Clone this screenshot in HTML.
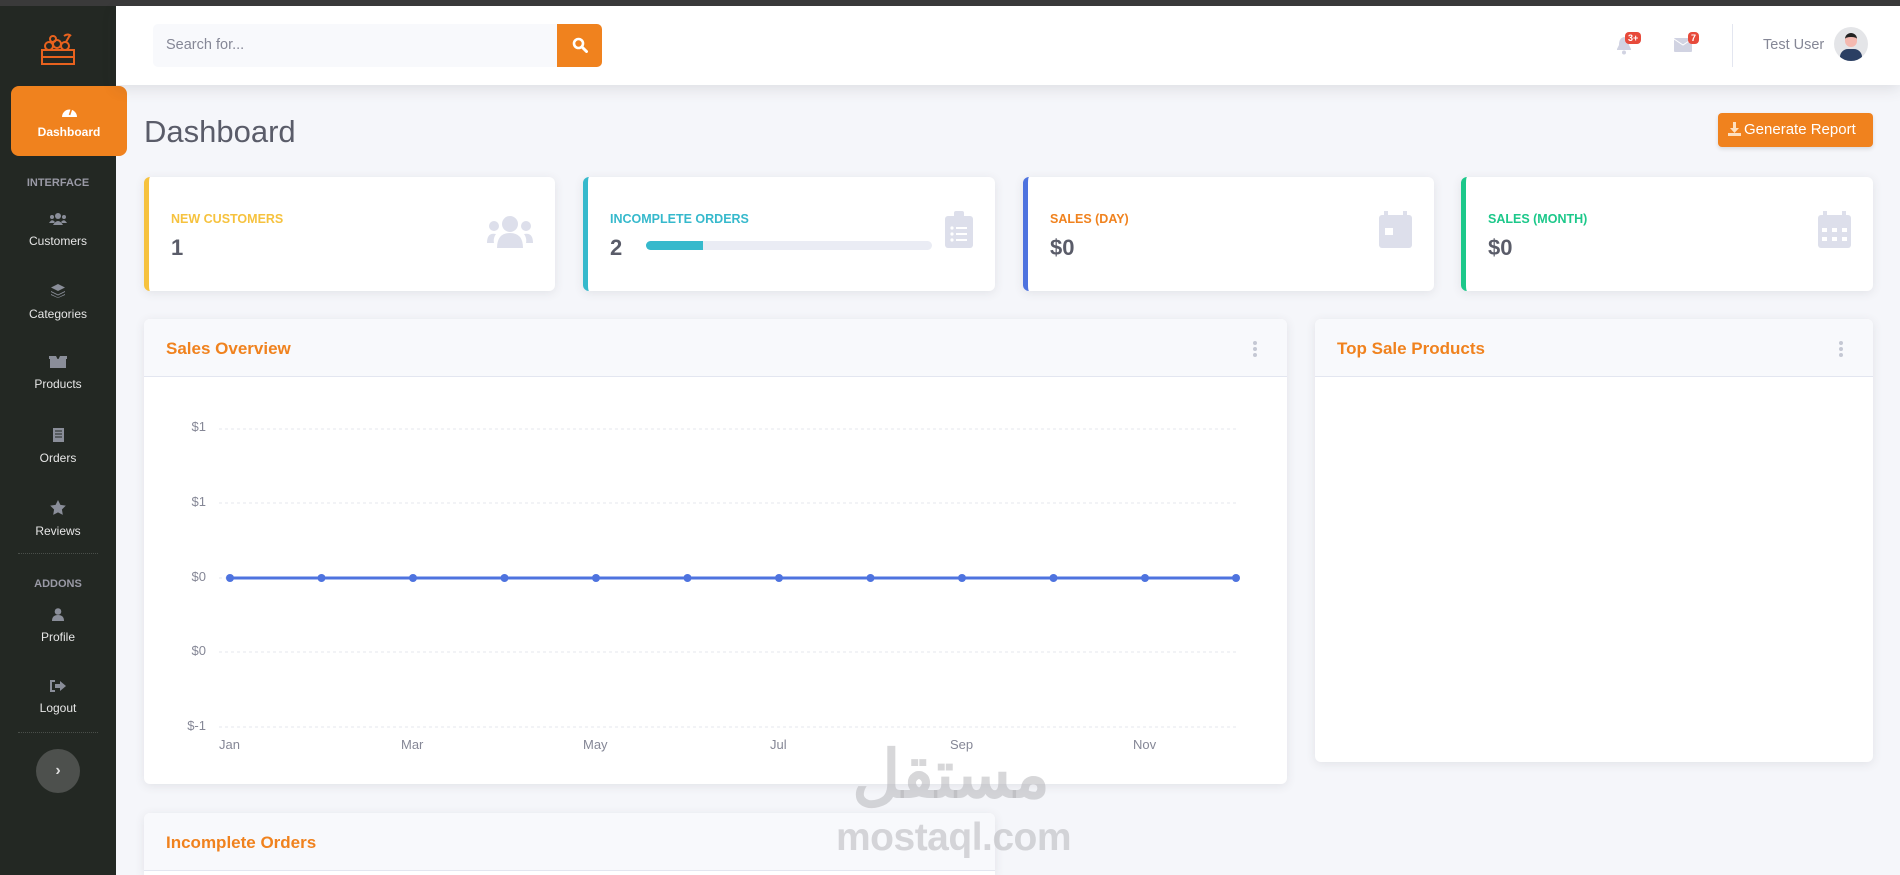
<!DOCTYPE html>
<html style="overflow:hidden;height:875px"><head><meta charset="utf-8">
<style>
*{box-sizing:border-box;margin:0;padding:0}
body{width:1900px;height:875px;overflow:hidden;background:#f5f6fa;font-family:"Liberation Sans",sans-serif;position:relative}
.abs{position:absolute}
.topline{left:0;top:0;width:1900px;height:6px;background:#3a3a3a}
.side{left:0;top:6px;width:116px;height:869px;background:#232823}
.topbar{left:116px;top:6px;width:1784px;height:79px;background:#fff;box-shadow:0 4px 14px rgba(58,59,69,.12)}
.sitem{position:absolute;left:0;width:116px;text-align:center;color:#e6e6e6;font-size:12px}
.sitem svg{display:block;margin:0 auto 9px}
.shead{position:absolute;left:0;width:116px;text-align:center;color:#9a9aa6;font-size:11px;font-weight:bold}
.sdiv{position:absolute;left:18px;width:80px;border-top:1px dotted #4a4f4a}
.card{position:absolute;background:#fff;border-radius:6px;box-shadow:0 2px 10px rgba(58,59,69,.1)}
.stat{top:177px;height:114px;border-left:5px solid}
.stat .lb{position:absolute;left:22px;top:35px;font-size:12.5px;font-weight:bold}
.stat .val{position:absolute;left:22px;top:58px;font-size:22px;font-weight:bold;color:#5a5c69}
.stat svg{position:absolute;right:22px;top:34px}
.ch{position:absolute;left:0;top:0;right:0;height:58px;background:#f8f9fc;border-bottom:1px solid #e3e6f0;border-radius:6px 6px 0 0}
.ch span{position:absolute;left:22px;top:20px;color:#f0821e;font-weight:bold;font-size:17px}
.dots{position:absolute;right:30px;top:22px;width:4px}
.dots i{display:block;width:4px;height:4px;border-radius:2px;background:#c5c8d4;margin-bottom:2px}
.yl{position:absolute;font-size:13px;color:#858796;text-align:right;width:40px;left:166px}
.xl{position:absolute;font-size:13px;color:#858796;top:737px}
</style></head><body>
<div class="abs topline"></div>
<div class="abs side">
  <svg class="abs" style="left:40px;top:26px" width="36" height="34" viewBox="0 0 36 34" fill="none" stroke="#e8621e" stroke-width="2"><rect x="2" y="18" width="32" height="14"/><line x1="2" y1="25" x2="34" y2="25"/><circle cx="9" cy="14" r="4"/><circle cx="17" cy="12" r="4"/><circle cx="25" cy="14" r="4"/><circle cx="13" cy="7" r="3"/><path d="M26 10 L30 3 M24 4 Q28 1 31 4"/></svg>
  <div class="abs" style="left:11px;top:80px;width:116px;height:70px;background:#f0821e;border-radius:8px;color:#fff;text-align:center;font-size:12px;font-weight:bold">
    <svg style="display:block;margin:18px auto 7px" width="17" height="14" viewBox="0 0 17 14"><path d="M1 13 A7.5 7.5 0 1 1 16 13 Z" fill="#fff"/><path d="M8.5 11 L10.5 5" stroke="#f0821e" stroke-width="1.6"/></svg>Dashboard</div>
  <div class="shead" style="top:171px">INTERFACE</div>
  <div class="sitem" style="top:207px"><svg width="18" height="12" viewBox="0 0 18 12" fill="#8a8e99"><circle cx="9" cy="3" r="3"/><circle cx="3" cy="4" r="2"/><circle cx="15" cy="4" r="2"/><path d="M4 12 Q9 4 14 12Z"/><path d="M0 10 Q3 5 6 9 L5 10Z M18 10 Q15 5 12 9 L13 10Z"/></svg>Customers</div>
  <div class="sitem" style="top:278px"><svg width="14" height="14" viewBox="0 0 14 14" fill="#8a8e99"><path d="M7 0 L14 3.5 L7 7 L0 3.5Z M0 7 L7 10.5 L14 7 L14 8 L7 11.5 L0 8Z M0 10 L7 13.5 L14 10 L14 11 L7 14 L0 11Z"/></svg>Categories</div>
  <div class="sitem" style="top:350px"><svg width="18" height="12" viewBox="0 0 18 12" fill="#8a8e99"><rect x="1" y="3" width="16" height="9"/><path d="M0 0 L7 0 L9 4 L11 0 L18 0 L18 3 L0 3Z"/></svg>Products</div>
  <div class="sitem" style="top:422px"><svg width="11" height="14" viewBox="0 0 11 14" fill="#8a8e99"><rect width="11" height="14"/><path d="M2 3h7M2 6h7M2 9h7" stroke="#232823"/></svg>Orders</div>
  <div class="sitem" style="top:494px"><svg width="16" height="15" viewBox="0 0 24 23" fill="#8a8e99"><path d="M12 0l3.7 7.5 8.3 1.2-6 5.8 1.4 8.3L12 18.9 4.6 22.8 6 14.5 0 8.7l8.3-1.2z"/></svg>Reviews</div>
  <div class="sdiv" style="top:547px"></div>
  <div class="shead" style="top:572px">ADDONS</div>
  <div class="sitem" style="top:602px"><svg width="12" height="13" viewBox="0 0 12 13" fill="#8a8e99"><circle cx="6" cy="3.5" r="3.3"/><path d="M0 13 Q0 7 6 7 Q12 7 12 13Z"/></svg>Profile</div>
  <div class="sitem" style="top:674px"><svg width="16" height="12" viewBox="0 0 16 12" fill="#8a8e99"><path d="M5 1H1v10h4" stroke="#8a8e99" stroke-width="2" fill="none"/><path d="M5 4h5V1l6 5-6 5V8H5z"/></svg>Logout</div>
  <div class="sdiv" style="top:726px"></div>
  <div class="abs" style="left:36px;top:743px;width:44px;height:44px;border-radius:22px;background:#4d504d;color:#ddd;text-align:center;line-height:44px;font-size:16px;font-weight:bold">›</div>
</div>
<div class="abs topbar">
  <div class="abs" style="left:37px;top:18px;width:404px;height:43px;background:#f8f9fc;border-radius:5px 0 0 5px;color:#858796;font-size:14.5px;line-height:43px;padding-left:13px">Search for...</div>
  <div class="abs" style="left:441px;top:18px;width:45px;height:43px;background:#f0821e;border-radius:0 5px 5px 0"><svg style="margin:13px 0 0 15px" width="16" height="16" viewBox="0 0 16 16"><circle cx="6.5" cy="6.5" r="4.5" stroke="#fff" stroke-width="2.6" fill="none"/><path d="M10 10l4.5 4.5" stroke="#fff" stroke-width="3" stroke-linecap="round"/></svg></div>
  <svg class="abs" style="left:1500px;top:31px" width="16" height="18" viewBox="0 0 16 18" fill="#d1d3e2"><path d="M8 0C4 1 3 4 3 8L1 12v1h14v-1l-2-4c0-4-1-7-5-8z"/><circle cx="8" cy="15.5" r="2"/></svg>
  <div class="abs" style="left:1509px;top:26px;background:#e74a3b;color:#fff;font-size:9px;font-weight:bold;border-radius:4px;padding:1px 3px">3+</div>
  <svg class="abs" style="left:1558px;top:32px" width="18" height="14" viewBox="0 0 18 14" fill="#d1d3e2"><rect width="18" height="14" rx="1"/><path d="M0 1l9 6 9-6" stroke="#fff" fill="none"/></svg>
  <div class="abs" style="left:1572px;top:26px;background:#e74a3b;color:#fff;font-size:9px;font-weight:bold;border-radius:4px;padding:1px 3px">7</div>
  <div class="abs" style="left:1616px;top:18px;width:1px;height:43px;background:#e3e6f0"></div>
  <div class="abs" style="left:1647px;top:31px;font-size:14.5px;color:#858796">Test User</div>
  <div class="abs" style="left:1718px;top:21px;width:34px;height:34px;border-radius:17px;background:#e4e5e8;overflow:hidden"><div style="position:absolute;left:11px;top:6px;width:12px;height:14px;border-radius:6px;background:#f4b9b0;border-top:4px solid #222"></div><div style="position:absolute;left:6px;top:22px;width:22px;height:14px;border-radius:8px 8px 0 0;background:#2b3f63"></div></div>
</div>
<div class="abs" style="left:144px;top:114px;font-size:31px;color:#5a5c69">Dashboard</div>
<div class="abs" style="left:1718px;top:113px;width:155px;height:34px;background:#f0821e;border-radius:4px;color:#fff;font-size:15px;line-height:34px;padding-left:10px;box-shadow:0 2px 4px rgba(0,0,0,.12)"><svg style="vertical-align:-2px;margin-right:3px" width="13" height="14" viewBox="0 0 13 14" fill="#fde0c0"><path d="M5 0h3v6h3L6.5 11 2 6h3z"/><rect y="11" width="13" height="3"/></svg>Generate Report</div>

<div class="card stat" style="left:144px;width:411px;border-color:#f6c23e"><div class="lb" style="color:#f6c23e">NEW CUSTOMERS</div><div class="val">1</div><svg style="top:38px" width="46" height="33" viewBox="0 0 46 33" fill="#dddfeb"><circle cx="23" cy="9" r="8"/><circle cx="7" cy="11" r="5"/><circle cx="39" cy="11" r="5"/><path d="M10 33 Q10 18 23 18 Q36 18 36 33Z"/><path d="M0 28 Q0 17 9 19 Q6 23 7 28Z M46 28 Q46 17 37 19 Q40 23 39 28Z"/></svg></div>
<div class="card stat" style="left:583px;width:412px;border-color:#36b9cc"><div class="lb" style="color:#36b9cc">INCOMPLETE ORDERS</div><div class="val">2</div><div style="position:absolute;left:58px;top:64px;width:286px;height:9px;border-radius:5px;background:#eaecf4;overflow:hidden"><div style="width:57px;height:9px;background:#36b9cc"></div></div><svg width="28" height="37" viewBox="0 0 28 37" fill="#dddfeb"><rect y="5" width="28" height="32" rx="3"/><rect x="9" y="0" width="10" height="8" rx="2"/><g fill="#fff"><circle cx="7" cy="17" r="1.6"/><circle cx="7" cy="23" r="1.6"/><circle cx="7" cy="29" r="1.6"/><rect x="11" y="16" width="11" height="2"/><rect x="11" y="22" width="11" height="2"/><rect x="11" y="28" width="11" height="2"/></g></svg></div>
<div class="card stat" style="left:1023px;width:411px;border-color:#4e73df"><div class="lb" style="color:#f0821e">SALES (DAY)</div><div class="val">$0</div><svg width="33" height="37" viewBox="0 0 33 37" fill="#dddfeb"><rect x="5" y="0" width="4" height="7"/><rect x="24" y="0" width="4" height="7"/><rect y="4" width="33" height="33" rx="3"/><rect x="6" y="17" width="8" height="7" fill="#fff"/></svg></div>
<div class="card stat" style="left:1461px;width:412px;border-color:#1cc88a"><div class="lb" style="color:#1cc88a">SALES (MONTH)</div><div class="val">$0</div><svg width="33" height="37" viewBox="0 0 33 37" fill="#dddfeb"><rect x="5" y="0" width="4" height="7"/><rect x="24" y="0" width="4" height="7"/><rect y="4" width="33" height="33" rx="3"/><g fill="#fff"><rect x="4" y="17" width="5" height="4"/><rect x="14" y="17" width="5" height="4"/><rect x="24" y="17" width="5" height="4"/><rect x="4" y="26" width="5" height="4"/><rect x="14" y="26" width="5" height="4"/><rect x="24" y="26" width="5" height="4"/></g></svg></div>

<div class="card" style="left:144px;top:319px;width:1143px;height:465px"><div class="ch"><span>Sales Overview</span><div class="dots"><i></i><i></i><i></i></div></div></div>
<div class="card" style="left:1315px;top:319px;width:558px;height:443px"><div class="ch"><span>Top Sale Products</span><div class="dots"><i></i><i></i><i></i></div></div></div>
<div class="card" style="left:144px;top:813px;width:851px;height:62px;border-radius:6px 6px 0 0"><div class="ch"><span>Incomplete Orders</span></div></div>

<div class="yl" style="top:419px">$1</div>
<div class="yl" style="top:494px">$1</div>
<div class="yl" style="top:569px">$0</div>
<div class="yl" style="top:643px">$0</div>
<div class="yl" style="top:718px">$-1</div>
<svg class="abs" style="left:0;top:0" width="1300" height="800">
<g stroke="#e6e7ec" stroke-dasharray="3,3"><line x1="219" y1="429" x2="1237" y2="429"/><line x1="219" y1="503" x2="1237" y2="503"/><line x1="219" y1="578" x2="1237" y2="578"/><line x1="219" y1="652" x2="1237" y2="652"/><line x1="219" y1="727" x2="1237" y2="727"/></g>
<line x1="230" y1="578" x2="1236" y2="578" stroke="#4e73df" stroke-width="3"/>
<g fill="#4e73df"><circle cx="230" cy="578" r="4"/><circle cx="321.5" cy="578" r="4"/><circle cx="413" cy="578" r="4"/><circle cx="504.5" cy="578" r="4"/><circle cx="596" cy="578" r="4"/><circle cx="687.5" cy="578" r="4"/><circle cx="779" cy="578" r="4"/><circle cx="870.5" cy="578" r="4"/><circle cx="962" cy="578" r="4"/><circle cx="1053.5" cy="578" r="4"/><circle cx="1145" cy="578" r="4"/><circle cx="1236" cy="578" r="4"/></g>
</svg>
<div class="xl" style="left:219px">Jan</div>
<div class="xl" style="left:401px">Mar</div>
<div class="xl" style="left:583px">May</div>
<div class="xl" style="left:770px">Jul</div>
<div class="xl" style="left:950px">Sep</div>
<div class="xl" style="left:1133px">Nov</div>

<div class="abs" style="left:826px;top:738px;width:250px;text-align:center;font-family:'Liberation Sans','Noto Sans CJK SC',sans-serif;font-size:66px;font-weight:bold;color:rgba(175,175,180,.5);line-height:72px">مستقل</div>
<div class="abs" style="left:836px;top:815px;width:230px;text-align:center;font-size:39px;font-weight:bold;letter-spacing:-0.5px;color:rgba(175,175,180,.5);line-height:46px">mostaql.com</div>
</body></html>
